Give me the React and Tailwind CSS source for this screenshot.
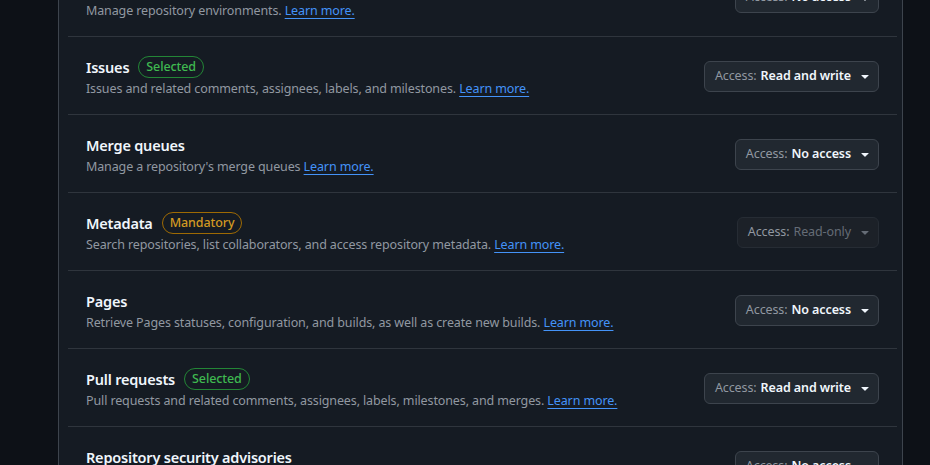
import React from 'react';

const rows = [
  { title: 'Environments', desc: 'Manage repository environments.', access: 'No access' },
  { title: 'Issues', badge: 'Selected', desc: 'Issues and related comments, assignees, labels, and milestones.', access: 'Read and write' },
  { title: 'Merge queues', desc: "Manage a repository's merge queues", access: 'No access' },
  { title: 'Metadata', badge: 'Mandatory', desc: 'Search repositories, list collaborators, and access repository metadata.', access: 'Read-only', disabled: true },
  { title: 'Pages', desc: 'Retrieve Pages statuses, configuration, and builds, as well as create new builds.', access: 'No access' },
  { title: 'Pull requests', badge: 'Selected', desc: 'Pull requests and related comments, assignees, labels, milestones, and merges.', access: 'Read and write' },
  { title: 'Repository security advisories', desc: 'View and manage repository security advisories.', access: 'No access' },
];

const Badge = ({ label }) => {
  const isMandatory = label === 'Mandatory';
  return (
    <span
      className={
        'inline-flex items-center h-[22px] px-[7px] rounded-full border text-[12.5px] font-medium leading-none tracking-[-0.1px] ' +
        (isMandatory ? 'border-[#9e6a03] text-[#d29922]' : 'border-[#238636] text-[#3fb950]')
      }
    >
      {label}
    </span>
  );
};

const Caret = ({ muted }) => (
  <svg width="16" height="16" viewBox="0 0 16 16" className={muted ? 'fill-[#656c76]' : 'fill-[#f0f6fc]'}>
    <path d="m4.427 7.427 3.396 3.396a.25.25 0 0 0 .354 0l3.396-3.396A.25.25 0 0 0 11.396 7H4.604a.25.25 0 0 0-.177.427Z" />
  </svg>
);

const AccessButton = ({ value, disabled }) => (
  <button
    type="button"
    className={
      'flex items-center h-[31px] mt-[1px] pl-[10px] pr-[5px] rounded-md border text-[12.5px] tracking-[-0.1px] ' +
      (disabled ? 'bg-[#1c2128] border-[#262c34]' : 'bg-[#212830] border-[#3d444d]')
    }
  >
    <span className="text-[#9198a1]">Access:</span>
    <span className={'ml-[4px] ' + (disabled ? 'text-[#656c76]' : 'font-semibold text-[#f0f6fc]')}>{value}</span>
    <span className="ml-[6px]">
      <Caret muted={disabled} />
    </span>
  </button>
);

const PermissionRow = ({ row, first }) => (
  <div
    className={
      'h-[78px] flex items-center justify-between px-[18px] ' +
      (first ? '' : 'border-t border-[#2f353d]')
    }
  >
    <div className="pt-[5px]">
      <div className="flex items-center gap-[9px] h-5">
        <span className="text-[14.5px] font-semibold text-[#f0f6fc] leading-5 tracking-[-0.2px]">{row.title}</span>
        {row.badge && <Badge label={row.badge} />}
      </div>
      <p className="mt-[2px] text-[12.5px] leading-5 text-[#9198a1] tracking-[-0.12px]">
        {row.desc}{' '}
        <a href="#" className="text-[#4493f8] underline underline-offset-[3px]">
          Learn more.
        </a>
      </p>
    </div>
    <AccessButton value={row.access} disabled={row.disabled} />
  </div>
);

export default function App() {
  return (
    <div className="h-[465px] overflow-hidden bg-[#0d1117] font-['Noto_Sans',sans-serif]">
      <div className="ml-[58px] w-[845px] h-full overflow-hidden border-x border-[#3d444d] bg-[#151b23] pl-[9px] pr-[5px]">
        <div className="-mt-[42px]">
          {rows.map((row, i) => (
            <PermissionRow key={row.title} row={row} first={i === 0} />
          ))}
        </div>
      </div>
    </div>
  );
}
